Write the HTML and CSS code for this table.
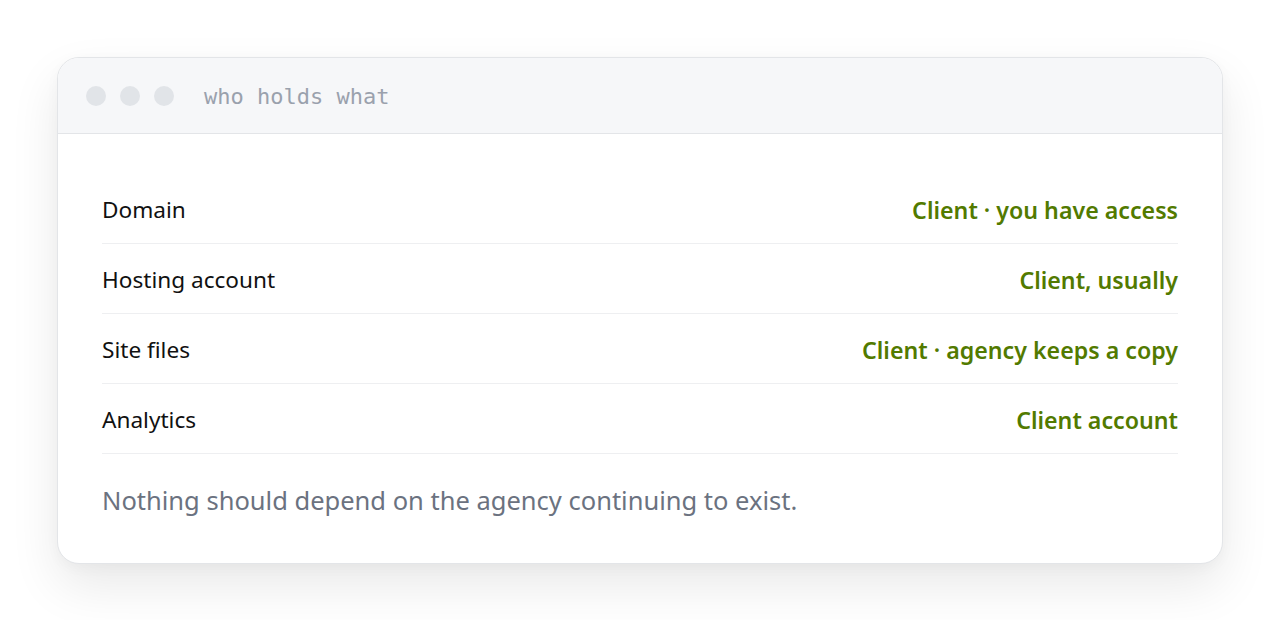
FILE: index.html
```html
<!DOCTYPE html>
<html lang="en">
<head>
<meta charset="utf-8">
<title>who holds what</title>
<link rel="stylesheet" href="styles.css">
</head>
<body>
<div class="stage">
  <div class="card">
    <div class="titlebar">
      <div class="dots"><span class="dot"></span><span class="dot"></span><span class="dot"></span></div>
      <span class="title">who holds what</span>
    </div>
    <div class="body">
      <div class="row"><span class="label">Domain</span><span class="value">Client · you have access</span></div>
      <div class="row"><span class="label">Hosting account</span><span class="value">Client, usually</span></div>
      <div class="row"><span class="label">Site files</span><span class="value">Client · agency keeps a copy</span></div>
      <div class="row"><span class="label">Analytics</span><span class="value">Client account</span></div>
      <p class="note">Nothing should depend on the agency continuing to exist.</p>
    </div>
  </div>
</div>
</body>
</html>
```

FILE: styles.css
```css
html, body {
  margin: 0;
  padding: 0;
  background: #ffffff;
}
body {
  font-family: "Noto Sans", "Open Sans", sans-serif;
  color: #111111;
}
.stage {
  padding: 57px 57px 56px 57px;
}
.card {
  border: 1px solid #e3e5e8;
  border-radius: 22px;
  background: #ffffff;
  overflow: hidden;
  box-shadow: 0 22px 50px rgba(0, 0, 0, 0.09), 0 4px 14px rgba(0, 0, 0, 0.03);
}
.titlebar {
  display: flex;
  align-items: center;
  gap: 30px;
  height: 75px;
  padding: 0 28px;
  background: #f6f7f9;
  border-bottom: 1px solid #e3e5e8;
}
.dots {
  display: flex;
  gap: 14px;
}
.dot {
  width: 20px;
  height: 20px;
  border-radius: 50%;
  background: #e1e4e8;
}
.title {
  font-family: "DejaVu Sans Mono", "Liberation Mono", monospace;
  font-size: 22px;
  color: #9aa1ad;
  padding-top: 2px;
}
.body {
  padding: 40px 44px 46px 44px;
}
.row {
  display: flex;
  justify-content: space-between;
  align-items: center;
  padding: 20px 0 17px 0;
  line-height: 32px;
  border-bottom: 1px solid #eeeff1;
  font-size: 22.6px;
}
.label {
  color: #111111;
}
.value {
  color: #527a00;
  font-weight: 600;
  font-size: 23.2px;
}
.note {
  margin: 0;
  padding: 29px 0 0 0;
  line-height: 34px;
  font-size: 25.5px;
  color: #6b7280;
}
```
